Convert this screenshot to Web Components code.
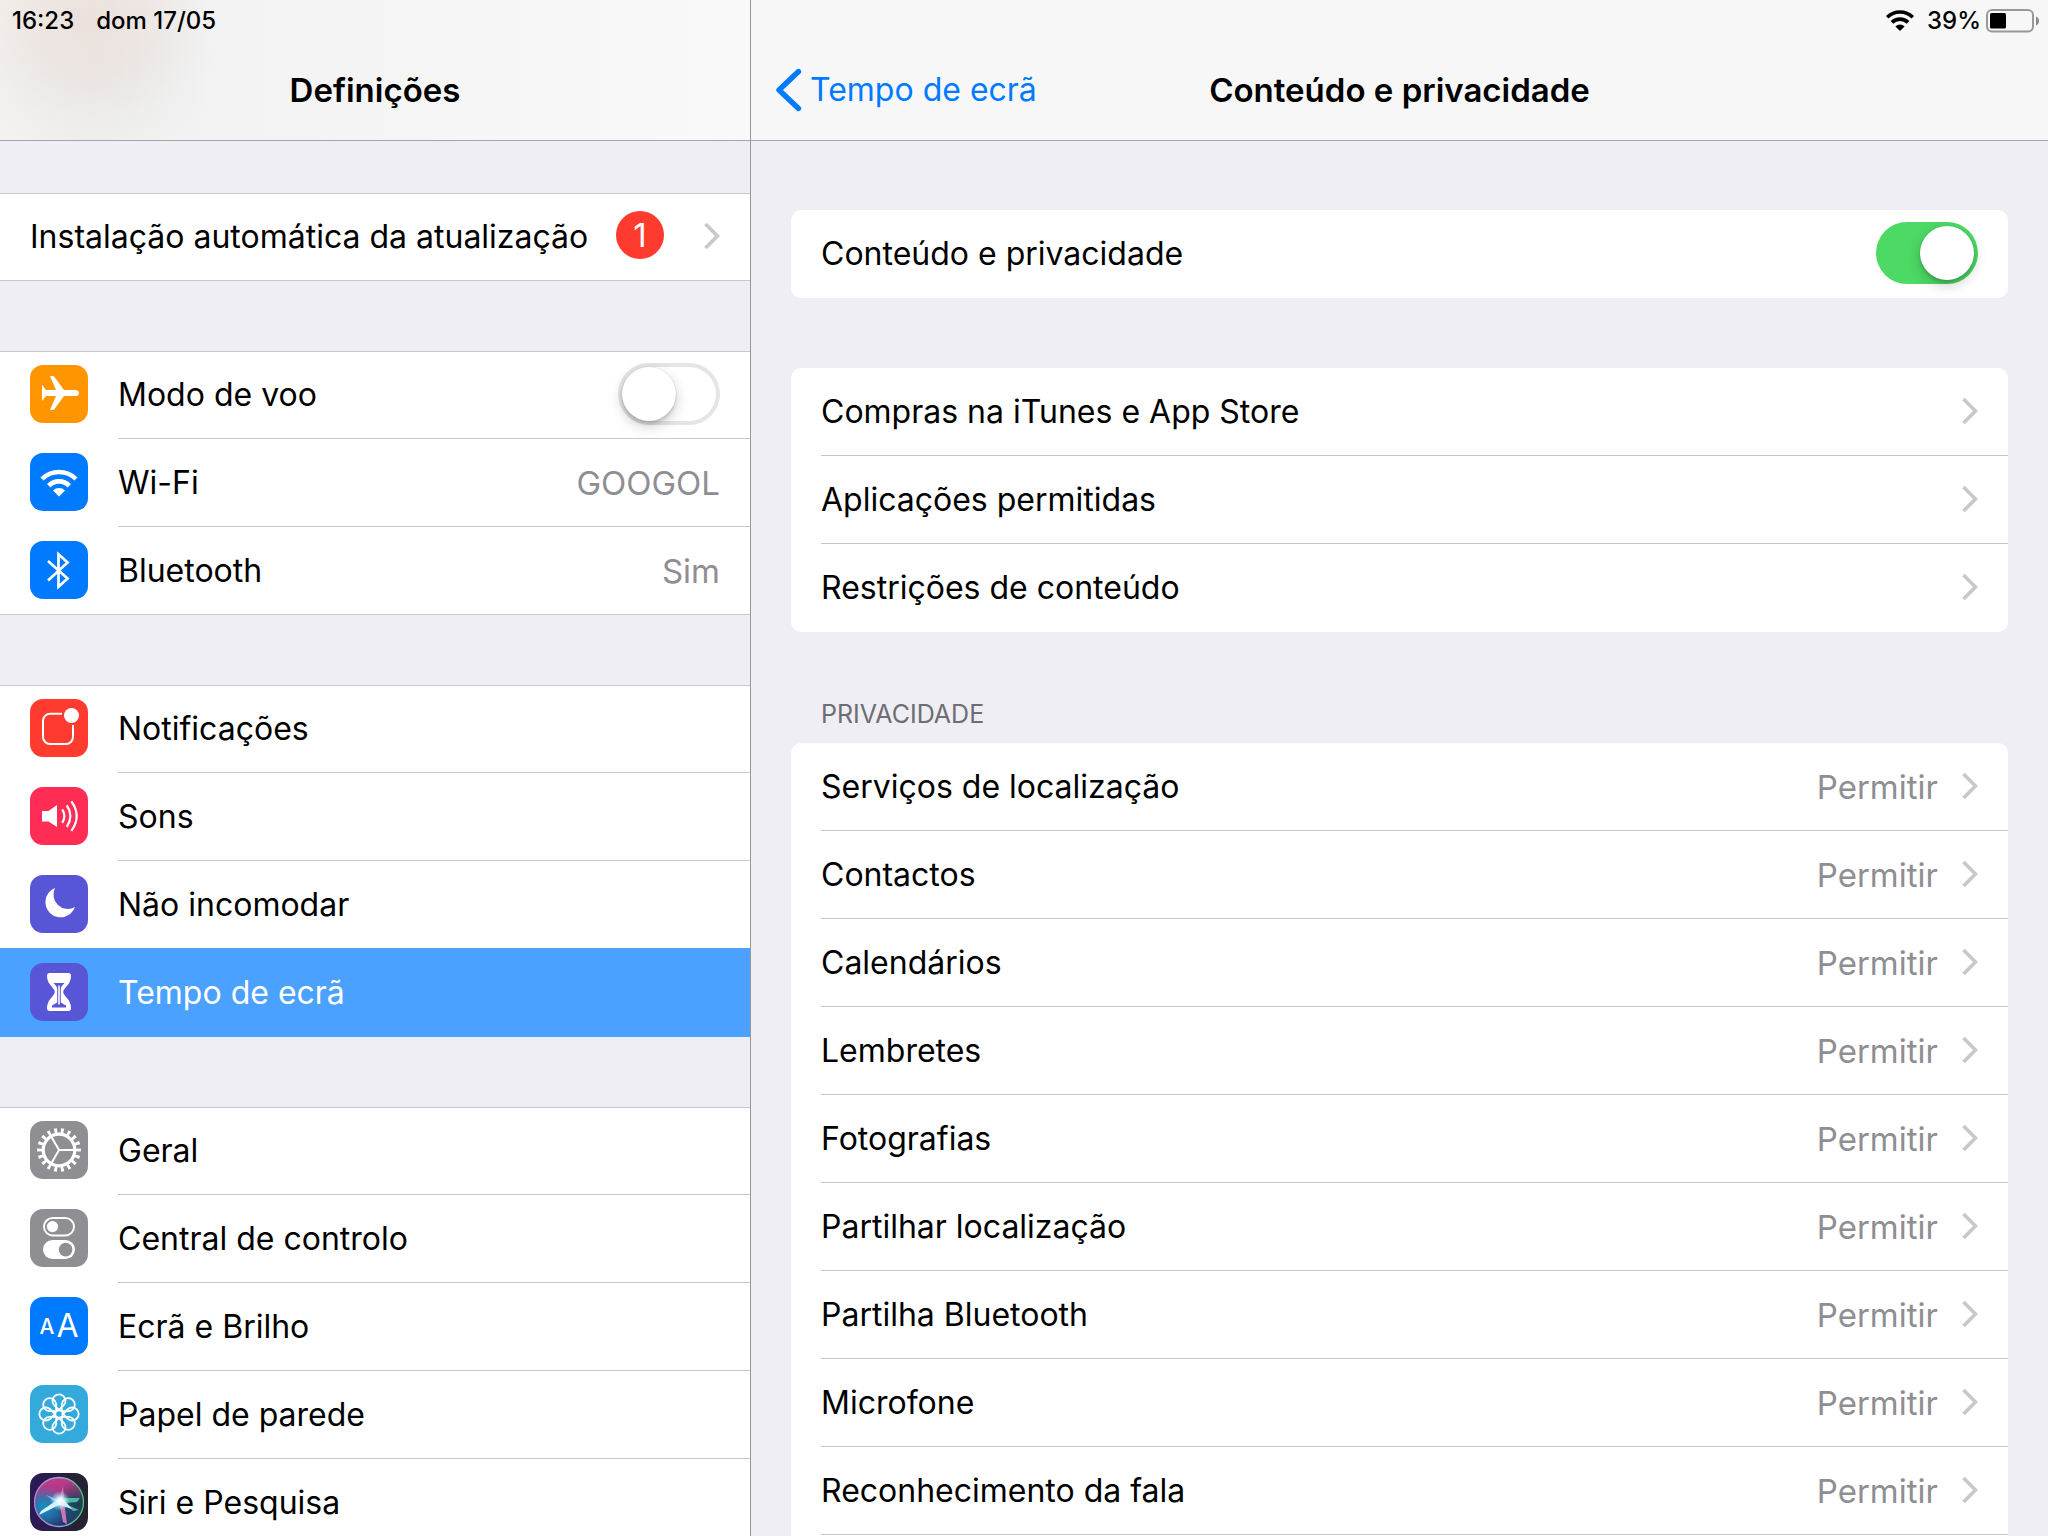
<!DOCTYPE html>
<html lang="pt-PT">
<head>
<meta charset="utf-8">
<meta name="viewport" content="width=device-width, initial-scale=1">
<title>Definições</title>
<style>
    * { box-sizing: border-box; }
    body {
        margin: 0;
        background: #efeef5;
        color: #000;
        font-family: Inter, "Liberation Sans", sans-serif;
        font-size: 32px;
        line-height: 40px;
    }
</style>
</head>
<body>

<split-view>
    <nav-pane slot="sidebar" tinted heading="Definições">
        <status-time slot="status" time="16:23" date="dom 17/05"></status-time>

        <list-group>
            <list-row label="Instalação automática da atualização" badge="1" arrow></list-row>
        </list-group>
        <list-group>
            <list-row icon="airplane" label="Modo de voo" type="switch"></list-row>
            <list-row icon="wifi" label="Wi-Fi" value="GOOGOL"></list-row>
            <list-row icon="bluetooth" label="Bluetooth" value="Sim"></list-row>
        </list-group>
        <list-group>
            <list-row icon="notifications" label="Notificações"></list-row>
            <list-row icon="sounds" label="Sons"></list-row>
            <list-row icon="moon" label="Não incomodar"></list-row>
            <list-row icon="hourglass" label="Tempo de ecrã" selected></list-row>
        </list-group>
        <list-group>
            <list-row icon="gear" label="Geral"></list-row>
            <list-row icon="controls" label="Central de controlo"></list-row>
            <list-row icon="display" label="Ecrã e Brilho"></list-row>
            <list-row icon="wallpaper" label="Papel de parede"></list-row>
            <list-row icon="siri" label="Siri e Pesquisa"></list-row>
        </list-group>
    </nav-pane>

    <nav-pane inset heading="Conteúdo e privacidade" back="Tempo de ecrã">
        <status-power slot="status" level="39"></status-power>

        <list-group card>
            <list-row label="Conteúdo e privacidade" type="switch" checked></list-row>
        </list-group>
        <list-group card>
            <list-row label="Compras na iTunes e App Store" arrow></list-row>
            <list-row label="Aplicações permitidas" arrow></list-row>
            <list-row label="Restrições de conteúdo" arrow></list-row>
        </list-group>
        <list-group card heading="PRIVACIDADE" continues>
            <list-row label="Serviços de localização" value="Permitir" arrow></list-row>
            <list-row label="Contactos" value="Permitir" arrow></list-row>
            <list-row label="Calendários" value="Permitir" arrow></list-row>
            <list-row label="Lembretes" value="Permitir" arrow></list-row>
            <list-row label="Fotografias" value="Permitir" arrow></list-row>
            <list-row label="Partilhar localização" value="Permitir" arrow></list-row>
            <list-row label="Partilha Bluetooth" value="Permitir" arrow></list-row>
            <list-row label="Microfone" value="Permitir" arrow></list-row>
            <list-row label="Reconhecimento da fala" value="Permitir" arrow></list-row>
        </list-group>
    </nav-pane>
</split-view>

<script>
    // one 58x58 drawing per icon, with the tile colour
    const icons = {
        airplane: ['#ff9500', `<path fill="#fff" d="M12 20L16 25H26L20 11H22.5Q23.5 11 24.5 12L34 25H46Q49 25.5 49 28Q49 30.5 46 31H34L24.5 44Q23.5 45 22.5 45H20L26 31H16L12 36Z"/>`],
        wifi: ['#007aff', `<g fill="none" stroke="#fff"><path stroke-width="4.4" d="M12 26A24 24 0 0 1 46 26"/><path stroke-width="4.8" d="M18.7 32.7A14.5 14.5 0 0 1 39.3 32.7"/></g><path fill="#fff" d="M29 43.5L23 37.4A8.6 8.6 0 0 1 35 37.4Z"/>`],
        bluetooth: ['#007aff', `<path fill="none" stroke="#fff" stroke-width="2.7" d="M18 20L37.6 37.5L28.5 45.8V13.2L37.6 21.5L18 39.5"/>`],
        notifications: ['#ff3b30', `<path fill="none" stroke="#fff" stroke-width="2" d="M32 14.8H20a7 7 0 0 0-7 7V38a7 7 0 0 0 7 7H36a7 7 0 0 0 7-7V26"/><circle cx="41.5" cy="16.5" r="7.5" fill="#fff"/>`],
        sounds: ['#ff2d55', `<path fill="#fff" d="M12 24H18.5L27 18V40L18.5 34.5H12Z"/><g fill="none" stroke="#fff" stroke-width="2.2"><path d="M32.2 22.4Q36.6 29 32.2 35.8"/><path d="M36.8 18.4Q44 29 36.8 39.8"/><path d="M41.4 14.4Q52 29 41.4 43.8"/></g>`],
        moon: ['#5856d6', `<path fill="#fff" d="M25 13A15.2 15.2 0 1 0 45 32A14.4 14.4 0 0 1 25 13Z"/>`],
        hourglass: ['#5856d6', `<path fill="#fff" d="M19.5 10H38.5Q41 10 41 13Q41 19 36 24Q33.2 27 33.2 29Q33.2 31 36 34Q41 39 41 45Q41 48 38.5 48H19.5Q17 48 17 45Q17 39 22 34Q24.8 31 24.8 29Q24.8 27 22 24Q17 19 17 13Q17 10 19.5 10Z"/><path fill="#5856d6" d="M23.5 20H34.5Q30.8 23.5 30.8 26V39.5L36 42.6V44.4H22V42.6L27.2 39.5V26Q27.2 23.5 23.5 20Z"/><path stroke="#fff" stroke-width="1.6" d="M29 22.5V41.5"/>`],
        gear: ['#8e8e93', `<g fill="none" stroke="#fff"><circle cx="29" cy="29" r="19.2" stroke-width="5.4" pathLength="36" stroke-dasharray=".85 1.15" stroke-dashoffset=".425"/><circle cx="29" cy="29" r="15.8" stroke-width="3.2"/><path stroke-width="2" d="M44 29H29L21.5 16M29 29L21.5 42"/></g>`],
        controls: ['#8e8e93', `<rect x="14" y="9" width="30" height="17.4" rx="8.7" fill="none" stroke="#fff" stroke-width="2"/><circle cx="22.5" cy="17.6" r="5.6" fill="#fff"/><rect x="13" y="31" width="32" height="19" rx="9.5" fill="#fff"/><circle cx="35.6" cy="40.6" r="6.8" fill="#8e8e93"/>`],
        display: ['#007aff', `<g fill="#fff" text-anchor="middle"><text x="17" y="37" font-size="21" font-weight="500">A</text><text x="37.5" y="40" font-size="32">A</text></g>`],
        wallpaper: ['#34aadc', `<g fill="none" stroke="#fff" stroke-width="1.8">${
            [0, 45, 90, 135, 180, 225, 270, 315].map(a => `<path transform="rotate(${a} 29 29)" d="M29 25L24 20A6.5 6.5 0 1 1 34 20Z"/>`).join('')
        }<circle cx="29" cy="29" r="3.7"/></g>`],
        siri: ['linear-gradient(90deg, #2c1a57, #25242e)', `
            <defs>
                <linearGradient id="orb" x1="0" y1="0" x2="0" y2="1"><stop offset="0" stop-color="#c23a8c"/><stop offset=".3" stop-color="#a93a86"/><stop offset=".55" stop-color="#2d5f9c"/><stop offset="1" stop-color="#22356e"/></linearGradient>
                <radialGradient id="teal" cx=".2" cy=".62" r=".45"><stop offset="0" stop-color="#1b8fc0"/><stop offset="1" stop-color="#1b8fc0" stop-opacity="0"/></radialGradient>
                <radialGradient id="dark" cx=".9" cy=".55" r=".5"><stop offset="0" stop-color="#1d3c50"/><stop offset="1" stop-color="#1d3c50" stop-opacity="0"/></radialGradient>
                <radialGradient id="glow"><stop offset="0" stop-color="#fff"/><stop offset=".35" stop-color="#e4f8ff" stop-opacity=".9"/><stop offset="1" stop-color="#8fe6ff" stop-opacity="0"/></radialGradient>
                <linearGradient id="rim"><stop offset="0" stop-color="#c77bd0"/><stop offset=".5" stop-color="#9aa0d8"/><stop offset="1" stop-color="#49c36a"/></linearGradient>
            </defs>
            <circle cx="29" cy="29" r="24.5" fill="url(#orb)"/><circle cx="29" cy="29" r="24.5" fill="url(#teal)"/><circle cx="29" cy="29" r="24.5" fill="url(#dark)"/>
            <path fill="#56d6b0" opacity=".8" d="M28 25L50 25L47 29L33 30L49 37L43 38Z"/>
            <path fill="#e07ab8" opacity=".9" d="M29 28L33 13L34 28L37 51L33 49Z"/>
            <path fill="#d9f4ff" d="M30 25L11 38L9 42L29 32L33 33L42 36L34 27Z"/><path fill="#8fdcff" opacity=".7" d="M29 27L16 22L27 31Z"/>
            <circle cx="30" cy="28" r="10" fill="url(#glow)"/>
            <circle cx="29" cy="29" r="24.5" fill="none" stroke="url(#rim)" stroke-width="1.3"/>`]
    };

    const chevron = `<svg class="arrow" width="16" height="28" viewBox="0 0 16 28" aria-hidden="true"><path d="M1.5 2L13.5 14L1.5 26" fill="none" stroke="#c7c7cc" stroke-width="3.6"/></svg>`;

    class SettingIcon extends HTMLElement {
        connectedCallback() {
            const [background, drawing] = icons[this.getAttribute('name')];
            const root = this.attachShadow({mode: 'open'});
            root.innerHTML = `
                <style>
                    :host {
                        display: block;
                        flex: none;
                        width: 58px;
                        height: 58px;
                        border-radius: 13px;
                        overflow: hidden;
                        background: ${background};
                    }
                    svg { display: block; }
                </style>
                <svg width="58" height="58" viewBox="0 0 58 58" aria-hidden="true">${drawing}</svg>
            `;
        }
    }

    class ListRow extends HTMLElement {
        connectedCallback() {
            const label = this.getAttribute('label');
            const icon = this.getAttribute('icon');
            const value = this.getAttribute('value');
            const badge = this.getAttribute('badge');
            const isSwitch = this.getAttribute('type') === 'switch';

            const body = `
                <span class="label">${label}</span>
                ${badge ? `<span class="badge">${badge}</span>` : ''}
                ${value ? `<span class="value">${value}</span>` : ''}
                ${isSwitch ? `<input type="checkbox" role="switch" ${this.hasAttribute('checked') ? 'checked' : ''}>` : ''}
                ${this.hasAttribute('arrow') ? chevron : ''}
            `;
            // a switch row toggles as a whole, any other row opens a page
            const tag = isSwitch ? 'label' : 'a';

            const root = this.attachShadow({mode: 'open'});
            root.innerHTML = `
                <style>
                    * { box-sizing: border-box; }
                    :host { display: block; }
                    .row {
                        display: flex;
                        align-items: center;
                        gap: 30px;
                        padding-left: 30px;
                        color: inherit;
                        text-decoration: none;
                    }
                    setting-icon { margin-bottom: 2px; }
                    .body {
                        flex: 1;
                        min-width: 0;
                        display: flex;
                        align-items: center;
                        height: 88px;
                        padding: 0 30px 1px 0;
                        border-bottom: 1px solid var(--row-line, transparent);
                    }
                    .label, .value { padding-top: 2px; }
                    .label {
                        flex: 1;
                        white-space: nowrap;
                    }
                    .value {
                        color: #8e8e93;
                        font-size: 33px;
                    }
                    .badge {
                        width: 48px;
                        height: 48px;
                        margin: 0 40px 2px 0;
                        border-radius: 50%;
                        background: #ff3b30;
                        color: #fff;
                        font-size: 33px;
                        line-height: 48px;
                        text-align: center;
                    }
                    .value + .arrow { margin-left: 24px; }
                    .arrow { flex: none; }

                    input {
                        appearance: none;
                        flex: none;
                        width: 102px;
                        height: 62px;
                        margin: 0;
                        padding: 4px;
                        border-radius: 31px;
                        background: #fff;
                        box-shadow: inset 0 0 0 4px #e5e5e5;
                    }
                    input::before {
                        content: '';
                        display: block;
                        width: 54px;
                        height: 54px;
                        border-radius: 50%;
                        background: #fff;
                        box-shadow: 0 5px 14px rgba(0, 0, 0, .2), 0 3px 3px rgba(0, 0, 0, .12), 0 0 1px rgba(0, 0, 0, .2);
                    }
                    input:checked {
                        background: #4cd964;
                        box-shadow: none;
                    }
                    input:checked::before { margin-left: auto; }

                    /* the highlight also hides the line above it */
                    :host([selected]) {
                        position: relative;
                        margin-top: -1px;
                        padding-top: 1px;
                        background: #4ba1ff;
                        color: #fff;
                    }
                </style>
                <${tag} class="row" ${isSwitch ? '' : 'href="#"'}>
                    ${icon ? `<setting-icon name="${icon}"></setting-icon>` : ''}
                    <span class="body">${body}</span>
                </${tag}>
            `;
        }
    }

    class ListGroup extends HTMLElement {
        connectedCallback() {
            const heading = this.getAttribute('heading');
            const root = this.attachShadow({mode: 'open'});
            root.innerHTML = `
                <style>
                    :host { display: block; }
                    .rows {
                        background: #fff;
                        box-shadow: inset 0 1px #c8c7cc, inset 0 -1px #c8c7cc;
                    }
                    :host([card]) .rows {
                        border-radius: 10px;
                        box-shadow: none;
                    }
                    h2 {
                        margin: 0;
                        padding: 0 30px 13px;
                        color: #6d6d72;
                        font-size: 25px;
                        font-weight: 400;
                        line-height: 32px;
                    }
                    ::slotted(list-row) { --row-line: #c8c7cc; }
                    ::slotted(list-row:last-child) { --row-line: transparent; }
                    :host([continues]) ::slotted(list-row) { --row-line: #c8c7cc; }
                    :host([continues]) .rows { padding-bottom: 30px; }
                </style>
                ${heading ? `<h2>${heading}</h2>` : ''}
                <div class="rows"><slot></slot></div>
            `;
        }
    }

    class StatusTime extends HTMLElement {
        connectedCallback() {
            const root = this.attachShadow({mode: 'open'});
            root.innerHTML = `
                <style>
                    :host { display: flex; gap: 22px; padding-left: 12px; }
                </style>
                <span>${this.getAttribute('time')}</span>
                <span>${this.getAttribute('date')}</span>
            `;
        }
    }

    class StatusPower extends HTMLElement {
        connectedCallback() {
            const level = this.getAttribute('level');
            const root = this.attachShadow({mode: 'open'});
            root.innerHTML = `
                <style>
                    :host { display: flex; justify-content: flex-end; align-items: center; padding-right: 8px; }
                    .wifi { margin-right: 12px; }
                    .battery { margin-left: 5px; }
                </style>
                <svg class="wifi" width="30" height="22" viewBox="0 0 30 22" aria-hidden="true">
                    <g fill="none" stroke="#000">
                        <path stroke-width="3.6" d="M2.2 7.2A18.4 18.4 0 0 1 27.8 7.2"/>
                        <path stroke-width="3.8" d="M7 12.4A11.6 11.6 0 0 1 23 12.4"/>
                    </g>
                    <path d="M15 21L10.4 16.4A6.6 6.6 0 0 1 19.6 16.4Z"/>
                </svg>
                <span>${level}%</span>
                <svg class="battery" width="54" height="24" viewBox="0 0 54 24" aria-hidden="true">
                    <rect x="1" y="1" width="46" height="21.6" rx="5" fill="none" stroke="#98989b" stroke-width="2"/>
                    <rect x="4" y="4" width="${Math.round(41 * level / 100)}" height="15.4" rx="1.5"/>
                    <path fill="#8a8a8d" d="M50 7.5Q53 8.8 53 12Q53 15.2 50 16.5Z"/>
                </svg>
            `;
        }
    }

    class NavPane extends HTMLElement {
        connectedCallback() {
            const back = this.getAttribute('back');
            const root = this.attachShadow({mode: 'open'});
            root.innerHTML = `
                <style>
                    * { box-sizing: border-box; }
                    :host {
                        display: flex;
                        flex-direction: column;
                        min-width: 0;
                        min-height: 0;
                    }
                    header {
                        flex: none;
                        background: #f7f7f8;
                        border-bottom: 1px solid #a7a6ab;
                    }
                    :host([tinted]) header {
                        background:
                            radial-gradient(ellipse 120px 100px at 90px 20px, rgba(236, 224, 218, .9), rgba(238, 230, 225, 0)),
                            radial-gradient(ellipse 120px 110px at 94px 60px, rgba(228, 228, 227, .8), rgba(236, 238, 240, 0)),
                            linear-gradient(to right, #f4f2f0, #f2f2f2 25%, #f6f6f6 62%, #f9f9fa);
                    }
                    .status {
                        height: 40px;
                        padding-top: 2px;
                        font-size: 24px;
                        font-weight: 500;
                        line-height: 38px;
                    }
                    .bar {
                        display: grid;
                        grid-template-columns: 1fr auto 1fr;
                        align-items: center;
                        height: 100px;
                        padding: 0 24px;
                    }
                    h1 {
                        grid-column: 2;
                        margin: 0;
                        font-size: 33px;
                        font-weight: 600;
                    }
                    .back {
                        justify-self: start;
                        display: flex;
                        align-items: center;
                        gap: 8px;
                        color: #007aff;
                        text-decoration: none;
                    }
                    .content {
                        flex: 1;
                        min-height: 0;
                        display: flex;
                        flex-direction: column;
                        gap: 70px;
                        padding: 52px 0;
                        overflow-y: auto;
                        scrollbar-width: none;
                    }
                    :host([inset]) .content { padding: 69px 40px; }
                    ::slotted(list-group) { flex: none; }
                    ::slotted(list-group[heading]) { margin-top: -4px; }
                </style>
                <header>
                    <div class="status"><slot name="status"></slot></div>
                    <div class="bar">
                        ${back ? `<a class="back" href="#">
                            <svg width="27" height="44" viewBox="0 0 27 44" aria-hidden="true"><path d="M23.5 3.5L4 22L23.5 40.5" fill="none" stroke="#007aff" stroke-width="5.4" stroke-linecap="round" stroke-linejoin="round"/></svg>
                            <span>${back}</span>
                        </a>` : ''}
                        <h1>${this.getAttribute('heading')}</h1>
                    </div>
                </header>
                <div class="content"><slot></slot></div>
            `;
        }
    }

    class SplitView extends HTMLElement {
        connectedCallback() {
            const root = this.attachShadow({mode: 'open'});
            root.innerHTML = `
                <style>
                    :host {
                        display: grid;
                        grid-template-columns: min(751px, 40vw) minmax(0, 1fr);
                        grid-template-rows: minmax(0, 1fr);
                        height: 100vh;
                    }
                    ::slotted([slot="sidebar"]) { border-right: 1px solid #98979c; }
                </style>
                <slot name="sidebar"></slot>
                <slot></slot>
            `;
        }
    }

    customElements.define('setting-icon', SettingIcon);
    customElements.define('list-row', ListRow);
    customElements.define('list-group', ListGroup);
    customElements.define('status-time', StatusTime);
    customElements.define('status-power', StatusPower);
    customElements.define('nav-pane', NavPane);
    customElements.define('split-view', SplitView);
</script>
</body>
</html>
